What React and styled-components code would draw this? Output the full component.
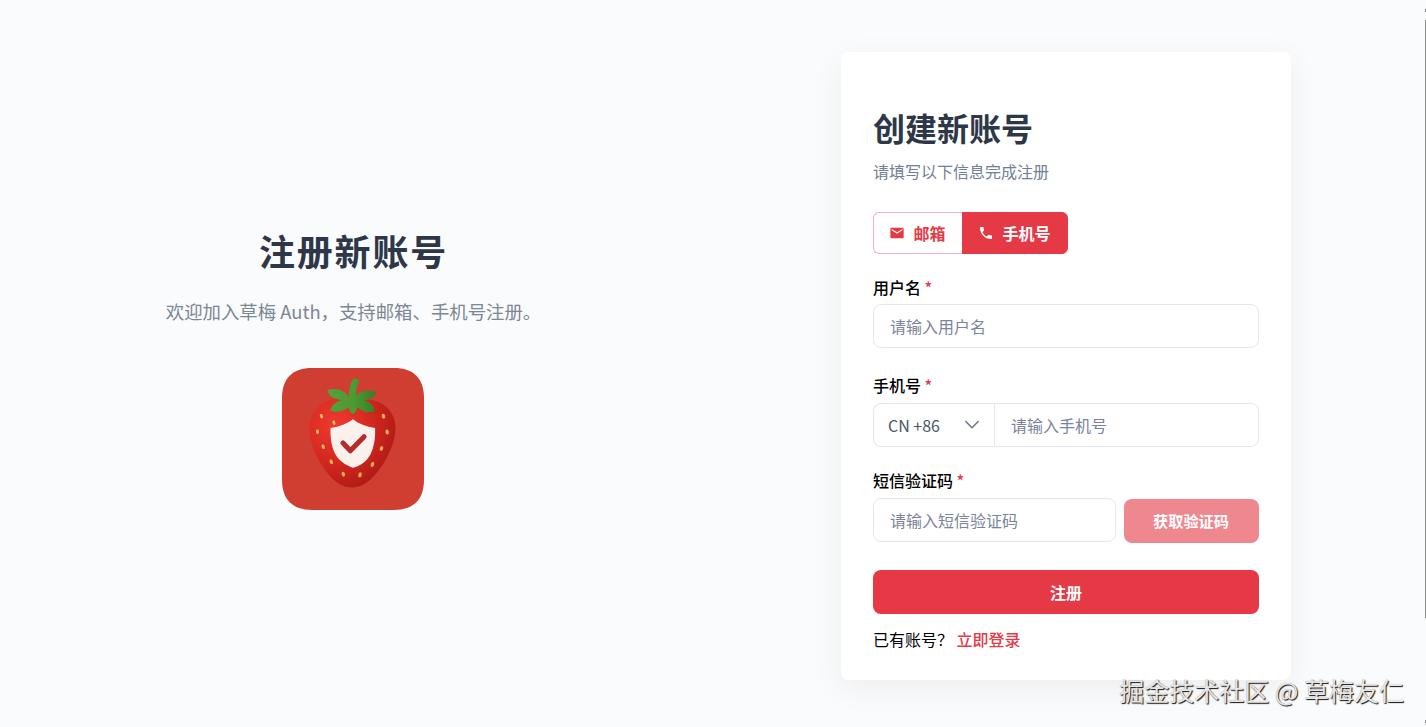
import React from "react";
import styled, { createGlobalStyle, css } from "styled-components";
import { MdEmail, MdPhone } from "react-icons/md";

const GlobalStyle = createGlobalStyle`
  * { box-sizing: border-box; }
  body {
    margin: 0;
    background: #fafbfd;
    color: #000;
    font-family: "Noto Sans CJK SC", "Noto Sans", sans-serif;
    font-size: 16px;
    overflow: hidden;
  }
  button, input { font: inherit; }
`;

const Page = styled.main`
  position: relative;
  display: flex;
  width: 100%;
  height: 727px;
  overflow: hidden;
`;

const Intro = styled.section`
  flex: 0 0 706px;
  display: flex;
  flex-direction: column;
  align-items: center;
  padding-top: 224px;
`;

const IntroTitle = styled.h1`
  margin: 0;
  color: #2d3748;
  font-size: 36px;
  font-weight: 700;
  line-height: 52px;
  letter-spacing: 1.8px;
  padding-left: 1px;
`;

const IntroText = styled.p`
  margin: 21px 0 43px;
  padding-left: 1px;
  color: #7b8794;
  font-size: 18.4px;
  line-height: 28px;
`;

const FormSide = styled.section`
  flex: 1;
  display: flex;
  justify-content: center;
  align-items: flex-start;
  padding-top: 52px;
`;

const Card = styled.form`
  width: 450px;
  height: 628px;
  padding: 54px 32px 0;
  border-radius: 8px;
  background: #fff;
  box-shadow: 0 8px 32px rgba(0, 0, 0, 0.06);
`;

const CardTitle = styled.h2`
  margin: 0;
  color: #2d3748;
  font-size: 32px;
  font-weight: 700;
  line-height: 42px;
`;

const CardHint = styled.p`
  margin: 11px 0 29px;
  color: #718096;
  line-height: 24px;
`;

const Tabs = styled.div`
  display: flex;
  height: 42px;
  margin-bottom: 21px;
`;

const Tab = styled.button`
  display: flex;
  align-items: center;
  gap: 8.5px;
  width: ${(p) => (p.$active ? 106 : 89)}px;
  padding: 0 0 0 15px;
  border: 1px solid #f3b0c3;
  border-right: 0;
  border-radius: 6px 0 0 6px;
  background: #fff;
  color: #e63946;
  font-weight: 700;
  white-space: nowrap;
  svg { flex: none; }
  ${(p) => p.$active && css`
    border: 1px solid #e63946;
    border-radius: 0 6px 6px 0;
    background: #e63946;
    color: #fff;
  `}
`;

const Field = styled.div`
  margin-bottom: ${(p) => p.$gap}px;
`;

const Label = styled.label`
  display: block;
  height: 24px;
  margin-bottom: ${(p) => p.$gap || 5}px;
  font-weight: 500;
  line-height: 24px;
`;

const Required = styled.span`
  margin-left: 3.5px;
  color: #e63946;
`;

const Input = styled.input`
  display: block;
  flex: 1;
  width: 100%;
  min-width: 0;
  height: 44px;
  padding: 0 16px;
  border: 1px solid #e2e8ec;
  border-radius: ${(p) => (p.$joined ? "0 8px 8px 0" : "8px")};
  background: #fff;
  outline: 0;
  &::placeholder { color: #7a849c; opacity: 1; }
`;

const Row = styled.div`
  display: flex;
  gap: ${(p) => p.$gap || 0}px;
`;

const CountrySelect = styled.div`
  display: flex;
  align-items: center;
  justify-content: space-between;
  width: 121px;
  height: 44px;
  padding: 0 14px;
  border: 1px solid #e2e8ec;
  border-right: 0;
  border-radius: 8px 0 0 8px;
  color: #4a5568;
`;

const Button = styled.button`
  flex: none;
  width: ${(p) => p.$width || "100%"};
  height: 44px;
  margin-top: ${(p) => p.$top || 0}px;
  padding: ${(p) => (p.$muted ? "0 1px 3px 0" : "0")};
  border: 0;
  border-radius: 8px;
  background: #e63946;
  color: #fff;
  font-weight: 700;
  font-size: ${(p) => p.$size || 16}px;
  opacity: ${(p) => (p.$muted ? 0.6 : 1)};
`;

const Footer = styled.p`
  margin: 13px 0 0;
  line-height: 24px;
`;

const LoginLink = styled.a`
  margin-left: 3.5px;
  color: #e63946;
  font-weight: 500;
`;

const Watermark = styled.div`
  position: absolute;
  right: 22px;
  bottom: 19px;
  color: #e6e6e6;
  font-size: 25px;
  line-height: 36px;
  white-space: nowrap;
  text-shadow: 1px 1px 1px #111, 0 0 1px #aaa;
`;

const ScrollThumb = styled.div`
  position: absolute;
  top: 20px;
  right: 0;
  width: 1px;
  height: 598px;
  background: #8b8b8b;
`;

const ScrollArrow = styled.div`
  position: absolute;
  top: ${(p) => p.$top}px;
  right: 0;
  width: 1px;
  height: 3px;
  background: #8b8b8b;
`;

const seeds = [
  [155, 168, -20], [192, 187, -15], [143, 214, -10], [160, 259, -20],
  [184, 304, -25], [220, 341, -15], [270, 343, 20], [307, 312, 20],
  [334, 264, 15], [351, 215, -10], [340, 168, -15],
];

function StrawberryLogo() {
  return (
    <svg width="142" height="142" viewBox="37 24 424 424" aria-label="草梅 Auth">
      <defs>
        <radialGradient id="berry" cx="0.3" cy="0.3" r="0.8">
          <stop offset="0" stopColor="#f03a31" />
          <stop offset="0.5" stopColor="#d62820" />
          <stop offset="1" stopColor="#aa1914" />
        </radialGradient>
        <linearGradient id="leaf" x1="0" y1="0" x2="1" y2="0">
          <stop offset="0" stopColor="#56a13a" />
          <stop offset="0.55" stopColor="#4c9a32" />
          <stop offset="1" stopColor="#387d29" />
        </linearGradient>
      </defs>
      <path
        fill="#cf3e30"
        d="M127 24H371C430 24 461 55 461 114V358C461 417 430 448 371 448H127C68 448 37 417 37 358V114C37 55 68 24 127 24Z"
      />
      <path
        fill="url(#berry)"
        d="M190 117C145 126 119 163 119 208C119 258 153 318 185 352C207 375 229 382 250 381C275 380 299 363 320 337C350 300 376 246 376 203C376 159 344 125 301 119C264 110 225 110 190 117Z"
      />
      {seeds.map(([x, y, angle]) => (
        <g key={`${x}-${y}`} transform={`translate(${x} ${y}) rotate(${angle})`}>
          <ellipse rx="6.5" ry="9" fill="#b3301c" />
          <ellipse rx="5" ry="7.5" fill="#f4a957" />
        </g>
      ))}
      <path
        fill="#8d1b12"
        opacity="0.3"
        d="M182 153C202 158 222 151 234 141L250 168L268 141C287 157 304 161 318 154L295 124H207Z"
      />
      <path
        fill="url(#leaf)"
        d="M237 113C236 93 240 72 247 60C252 54 268 56 268 63C261 77 257 92 258 106C270 92 293 89 318 95C318 109 300 120 279 120C299 122 314 138 314 154C296 160 276 155 263 141C261 150 256 157 250 163C242 157 237 150 235 141C222 153 202 158 181 152C183 136 200 122 222 119C195 121 173 107 173 89C201 82 227 92 237 113Z"
      />
      <path
        fill="#faf0ec"
        d="M249 177C266 191 288 199 315 203C316 236 312 259 301 282C289 304 270 316 249 322C228 315 207 302 196 281C185 259 181 233 182 203C209 199 232 190 249 177Z"
      />
      <path
        d="M219 248L241 271L282 229"
        fill="none"
        stroke="#b62b2c"
        strokeWidth="15"
        strokeLinecap="round"
        strokeLinejoin="round"
      />
    </svg>
  );
}

function ChevronDown() {
  return (
    <svg width="16" height="16" viewBox="0 0 16 16" fill="none" stroke="#6b7788" strokeWidth="1.5" strokeLinecap="round" strokeLinejoin="round">
      <path d="M1.8 4.5L8 10.7L14.2 4.5" />
    </svg>
  );
}

export default function App() {
  return (
    <Page>
      <GlobalStyle />
      <Intro>
        <IntroTitle>注册新账号</IntroTitle>
        <IntroText>欢迎加入草梅 Auth，支持邮箱、手机号注册。</IntroText>
        <StrawberryLogo />
      </Intro>
      <FormSide>
        <Card>
          <CardTitle>创建新账号</CardTitle>
          <CardHint>请填写以下信息完成注册</CardHint>
          <Tabs>
            <Tab type="button"><MdEmail size={16} />邮箱</Tab>
            <Tab type="button" $active><MdPhone size={16} />手机号</Tab>
          </Tabs>
          <Field $gap={25}>
            <Label>用户名<Required>*</Required></Label>
            <Input placeholder="请输入用户名" />
          </Field>
          <Field $gap={21}>
            <Label $gap={6}>手机号<Required>*</Required></Label>
            <Row>
              <CountrySelect>CN +86<ChevronDown /></CountrySelect>
              <Input $joined placeholder="请输入手机号" />
            </Row>
          </Field>
          <Field $gap={27}>
            <Label $gap={6}>短信验证码<Required>*</Required></Label>
            <Row $gap={8}>
              <Input placeholder="请输入短信验证码" />
              <Button type="button" $width="135px" $top={1} $size={15.2} $muted>获取验证码</Button>
            </Row>
          </Field>
          <Button type="button">注册</Button>
          <Footer>已有账号？<LoginLink>立即登录</LoginLink></Footer>
        </Card>
      </FormSide>
      <ScrollArrow $top={9} />
      <ScrollThumb />
      <ScrollArrow $top={720} />
      <Watermark>掘金技术社区 @ 草梅友仁</Watermark>
    </Page>
  );
}
